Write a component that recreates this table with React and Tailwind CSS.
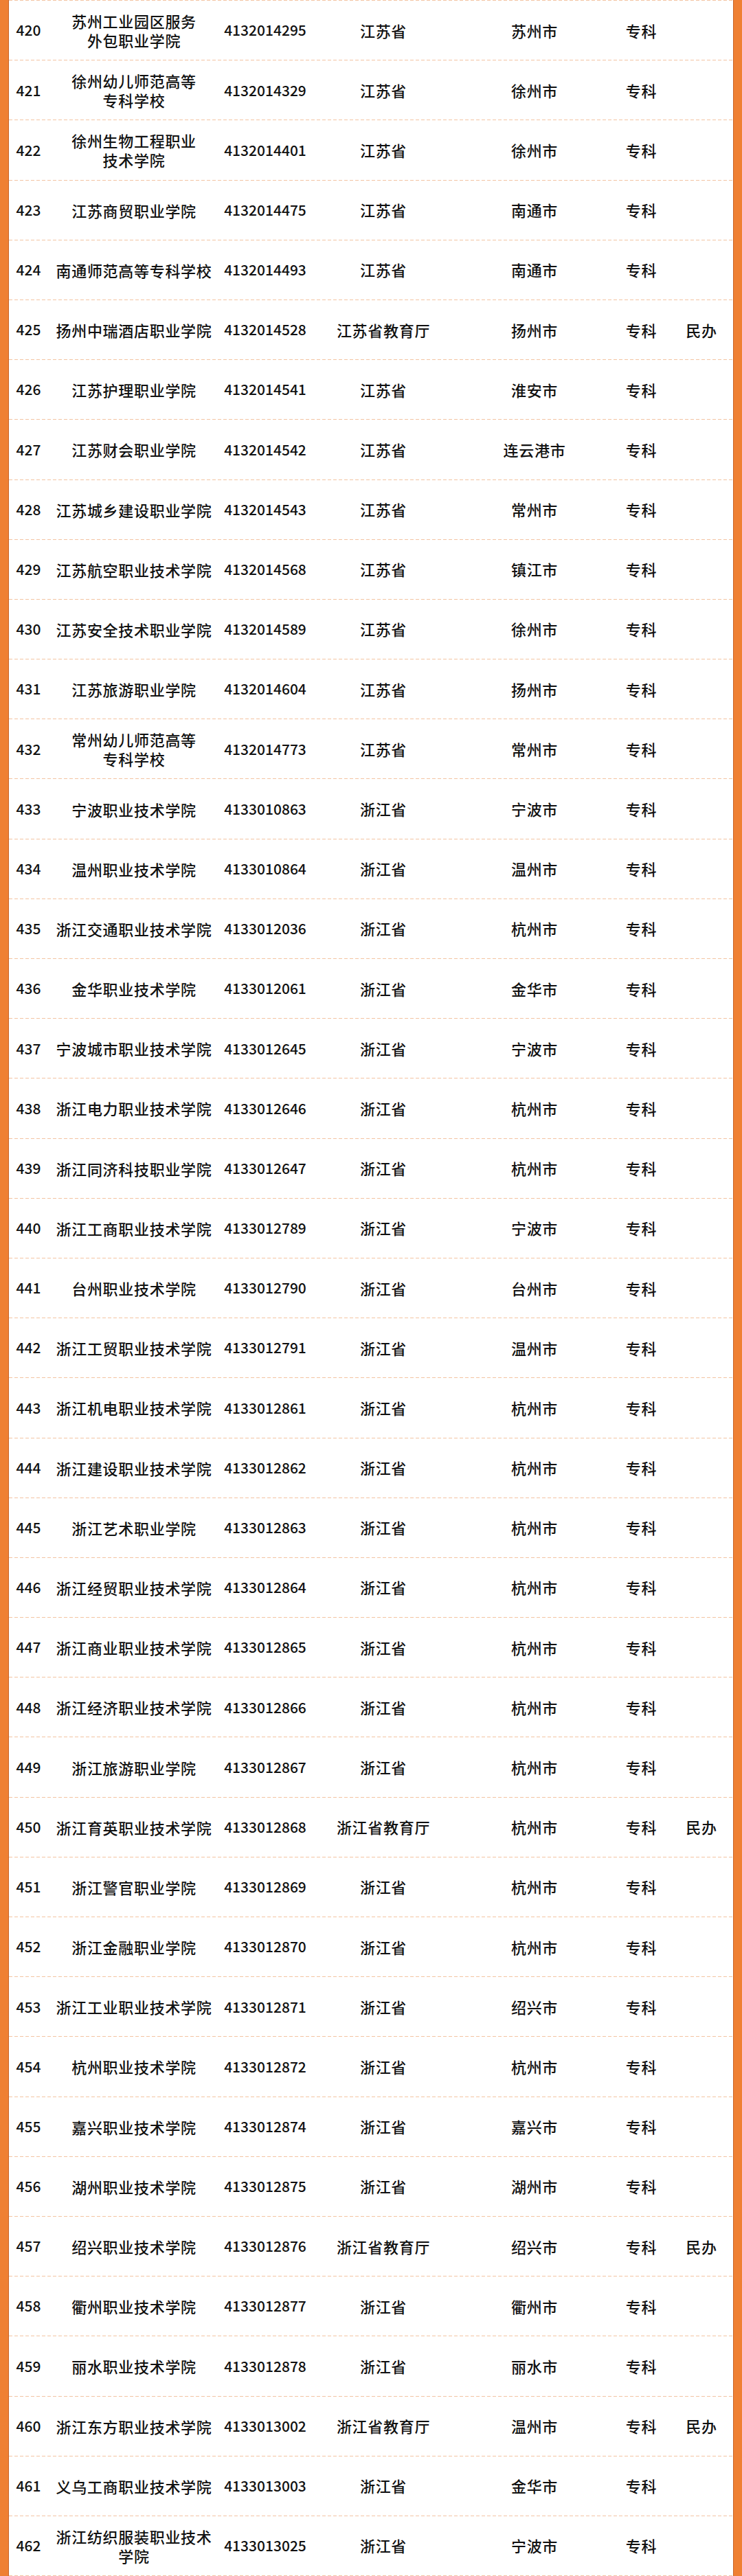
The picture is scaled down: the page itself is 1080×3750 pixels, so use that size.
import React from 'react';

const rows = [
  ['420', '苏州工业园区服务\n外包职业学院', '4132014295', '江苏省', '苏州市', '专科', ''],
  ['421', '徐州幼儿师范高等\n专科学校', '4132014329', '江苏省', '徐州市', '专科', ''],
  ['422', '徐州生物工程职业\n技术学院', '4132014401', '江苏省', '徐州市', '专科', ''],
  ['423', '江苏商贸职业学院', '4132014475', '江苏省', '南通市', '专科', ''],
  ['424', '南通师范高等专科学校', '4132014493', '江苏省', '南通市', '专科', ''],
  ['425', '扬州中瑞酒店职业学院', '4132014528', '江苏省教育厅', '扬州市', '专科', '民办'],
  ['426', '江苏护理职业学院', '4132014541', '江苏省', '淮安市', '专科', ''],
  ['427', '江苏财会职业学院', '4132014542', '江苏省', '连云港市', '专科', ''],
  ['428', '江苏城乡建设职业学院', '4132014543', '江苏省', '常州市', '专科', ''],
  ['429', '江苏航空职业技术学院', '4132014568', '江苏省', '镇江市', '专科', ''],
  ['430', '江苏安全技术职业学院', '4132014589', '江苏省', '徐州市', '专科', ''],
  ['431', '江苏旅游职业学院', '4132014604', '江苏省', '扬州市', '专科', ''],
  ['432', '常州幼儿师范高等\n专科学校', '4132014773', '江苏省', '常州市', '专科', ''],
  ['433', '宁波职业技术学院', '4133010863', '浙江省', '宁波市', '专科', ''],
  ['434', '温州职业技术学院', '4133010864', '浙江省', '温州市', '专科', ''],
  ['435', '浙江交通职业技术学院', '4133012036', '浙江省', '杭州市', '专科', ''],
  ['436', '金华职业技术学院', '4133012061', '浙江省', '金华市', '专科', ''],
  ['437', '宁波城市职业技术学院', '4133012645', '浙江省', '宁波市', '专科', ''],
  ['438', '浙江电力职业技术学院', '4133012646', '浙江省', '杭州市', '专科', ''],
  ['439', '浙江同济科技职业学院', '4133012647', '浙江省', '杭州市', '专科', ''],
  ['440', '浙江工商职业技术学院', '4133012789', '浙江省', '宁波市', '专科', ''],
  ['441', '台州职业技术学院', '4133012790', '浙江省', '台州市', '专科', ''],
  ['442', '浙江工贸职业技术学院', '4133012791', '浙江省', '温州市', '专科', ''],
  ['443', '浙江机电职业技术学院', '4133012861', '浙江省', '杭州市', '专科', ''],
  ['444', '浙江建设职业技术学院', '4133012862', '浙江省', '杭州市', '专科', ''],
  ['445', '浙江艺术职业学院', '4133012863', '浙江省', '杭州市', '专科', ''],
  ['446', '浙江经贸职业技术学院', '4133012864', '浙江省', '杭州市', '专科', ''],
  ['447', '浙江商业职业技术学院', '4133012865', '浙江省', '杭州市', '专科', ''],
  ['448', '浙江经济职业技术学院', '4133012866', '浙江省', '杭州市', '专科', ''],
  ['449', '浙江旅游职业学院', '4133012867', '浙江省', '杭州市', '专科', ''],
  ['450', '浙江育英职业技术学院', '4133012868', '浙江省教育厅', '杭州市', '专科', '民办'],
  ['451', '浙江警官职业学院', '4133012869', '浙江省', '杭州市', '专科', ''],
  ['452', '浙江金融职业学院', '4133012870', '浙江省', '杭州市', '专科', ''],
  ['453', '浙江工业职业技术学院', '4133012871', '浙江省', '绍兴市', '专科', ''],
  ['454', '杭州职业技术学院', '4133012872', '浙江省', '杭州市', '专科', ''],
  ['455', '嘉兴职业技术学院', '4133012874', '浙江省', '嘉兴市', '专科', ''],
  ['456', '湖州职业技术学院', '4133012875', '浙江省', '湖州市', '专科', ''],
  ['457', '绍兴职业技术学院', '4133012876', '浙江省教育厅', '绍兴市', '专科', '民办'],
  ['458', '衢州职业技术学院', '4133012877', '浙江省', '衢州市', '专科', ''],
  ['459', '丽水职业技术学院', '4133012878', '浙江省', '丽水市', '专科', ''],
  ['460', '浙江东方职业技术学院', '4133013002', '浙江省教育厅', '温州市', '专科', '民办'],
  ['461', '义乌工商职业技术学院', '4133013003', '浙江省', '金华市', '专科', ''],
  ['462', '浙江纺织服装职业技术\n学院', '4133013025', '浙江省', '宁波市', '专科', ''],
];

function Dashes() {
  return (
    <div className="h-px w-full bg-[linear-gradient(to_right,#f3c4a2_5px,transparent_5px)] bg-[length:8px_1px] bg-repeat-x" />
  );
}

function Row({ row }) {
  const [no, name, code, prov, city, level, kind] = row;
  return (
    <>
      <div className="grid h-[86.2px] grid-cols-[57px_250px_132px_212px_228px_83px_92px] items-center text-center text-[#111]">
        <div className="text-[21px]">{no}</div>
        <div className="whitespace-pre-line text-[22px] leading-[28px] tracking-[0.7px]">{name}</div>
        <div className="text-[21px]">{code}</div>
        <div className="text-[22px] tracking-[0.7px]">{prov}</div>
        <div className="text-[22px] tracking-[0.7px]">{city}</div>
        <div className="text-[22px] tracking-[0.7px]">{level}</div>
        <div className="text-[22px] tracking-[0.7px]">{kind}</div>
      </div>
      <Dashes />
    </>
  );
}

export default function App() {
  return (
    <div className="flex h-[3750px] w-[1080px] overflow-hidden bg-white font-['Noto_Sans_CJK_SC','Noto_Sans',sans-serif] font-medium">
      <div className="w-[13px] shrink-0 border-r border-[#c9652a] bg-[#ef8033]" />
      <div className="flex-1">
        <Dashes />
        {rows.map((r) => (
          <Row key={r[0]} row={r} />
        ))}
      </div>
      <div className="w-[13px] shrink-0 border-l border-[#c9652a] bg-[#ef8033]" />
    </div>
  );
}
